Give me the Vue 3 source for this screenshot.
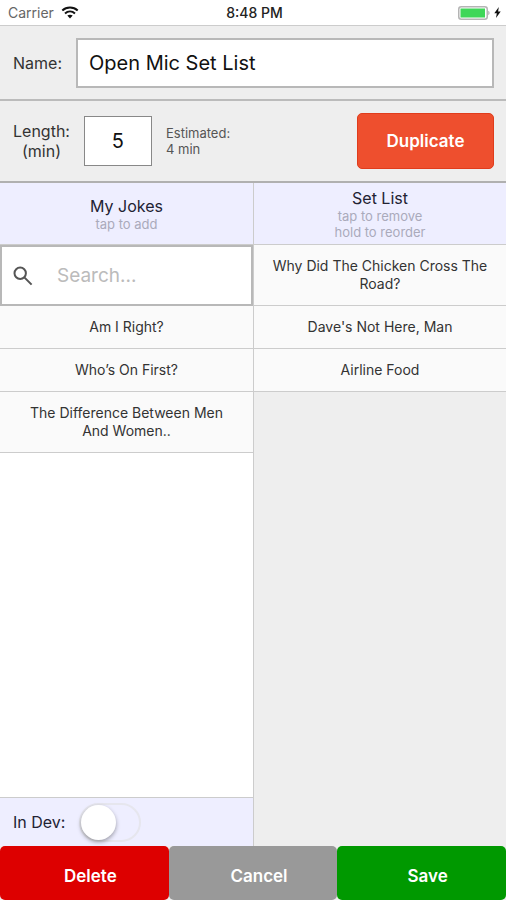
<script setup>
import { ref } from 'vue'

const name = ref('Open Mic Set List')
const length = ref('5')
const query = ref('')
const inDev = ref(false)
const jokes = ['Am I Right?', 'Who’s On First?', 'The Difference Between Men And Women..']
const setList = ['Why Did The Chicken Cross The Road?', "Dave's Not Here, Man", 'Airline Food']
</script>

<template>
  <div class="screen">
    <header class="status">
      <div class="carrier">
        <span>Carrier</span>
        <svg class="wifi" viewBox="0 0 18 13" aria-hidden="true">
          <path d="M1.3 4.6C5.6.6 12.4.6 16.7 4.6" />
          <path d="M4 7.5c2.9-2.6 7.1-2.6 10 0" />
          <path class="dot" d="M6.3 9.6c1.5-1.3 3.9-1.3 5.4 0L9 12.4z" />
        </svg>
      </div>
      <span class="time">8:48 PM</span>
      <div class="power">
        <svg class="battery" viewBox="0 0 32 14" aria-hidden="true">
          <rect x="0.75" y="0.75" width="28.5" height="12.5" rx="2.5" fill="#fff" stroke="#b4b4b4" stroke-width="1.5" />
          <rect x="2.5" y="2.5" width="24.5" height="9" fill="#3fd759" />
          <path d="M30.3 4.8c1.6.6 1.6 3.8 0 4.4z" fill="#aaa" />
        </svg>
        <svg class="bolt" viewBox="0 0 7 11" aria-hidden="true">
          <path d="M4.8 0 .3 6.2h2.5L2 11l4.7-6.4H4.1z" fill="#111" />
        </svg>
      </div>
    </header>

    <section class="bar name-bar">
      <label for="name">Name:</label>
      <input id="name" v-model="name" class="field name" type="text" />
    </section>

    <section class="bar length-bar">
      <label class="length-label" for="length">Length:<br />(min)</label>
      <input id="length" v-model="length" class="field length" type="text" inputmode="numeric" />
      <p class="estimate">Estimated:<br />4 min</p>
      <button class="duplicate" type="button">Duplicate</button>
    </section>

    <main class="columns">
      <section class="column left">
        <div class="heading">
          <h2>My Jokes</h2>
          <p>tap to add</p>
        </div>
        <label class="search">
          <svg viewBox="0 0 20 20" aria-label="Search">
            <circle cx="7.2" cy="7.2" r="5.7" />
            <path d="m11.6 11.6 7 7" />
          </svg>
          <input v-model="query" type="text" placeholder="Search..." />
        </label>
        <ul>
          <li v-for="joke in jokes" :key="joke">{{ joke }}</li>
        </ul>
        <label class="dev">
          <span>In Dev:</span>
          <input v-model="inDev" class="switch" type="checkbox" role="switch" />
        </label>
      </section>

      <section class="column right">
        <div class="heading">
          <h2>Set List</h2>
          <p>tap to remove<br />hold to reorder</p>
        </div>
        <ul>
          <li v-for="joke in setList" :key="joke">{{ joke }}</li>
        </ul>
      </section>
    </main>

    <footer class="actions">
      <button class="delete" type="button">Delete</button>
      <button class="cancel" type="button">Cancel</button>
      <button class="save" type="button">Save</button>
    </footer>
  </div>
</template>

<style>
body {
  margin: 0;
}
</style>

<style scoped>
.screen,
.screen * {
  box-sizing: border-box;
}
.screen {
  display: flex;
  flex-direction: column;
  min-height: 100vh;
  background: #eee;
  color: #333;
  font-family: Inter, "Liberation Sans", sans-serif;
  font-size: 16px;
}
input,
button {
  font-family: inherit;
}
h2,
p,
ul {
  margin: 0;
  padding: 0;
}
.status {
  display: grid;
  grid-template-columns: 1fr auto 1fr;
  align-items: center;
  height: 26px;
  padding: 0 5px 0 8px;
  border-bottom: 1px solid #ccc;
  background: #fff;
  font-size: 14px;
}
.carrier,
.power {
  display: flex;
  align-items: center;
  gap: 7px;
  color: #666;
}
.power {
  justify-content: flex-end;
  gap: 4px;
}
.time {
  color: #222;
  font-weight: 500;
}
.wifi {
  width: 18px;
  height: 13px;
  fill: none;
  stroke: #111;
  stroke-width: 2;
}
.wifi .dot {
  fill: #111;
  stroke: none;
}
.battery {
  width: 32px;
  height: 14px;
}
.bolt {
  width: 7px;
  height: 11px;
}
.bar {
  display: flex;
  align-items: center;
  gap: 14px;
  padding: 0 12px 0 13px;
}
.name-bar {
  height: 75px;
  border-bottom: 2px solid #bbb;
}
.length-bar {
  height: 82px;
  border-bottom: 2px solid #b0b0b0;
}
.field {
  height: 50px;
  border: 2px solid #b8b8b8;
  border-radius: 0;
  outline: none;
  background: #fff;
  color: #111;
  font-size: 20px;
}
.name {
  flex: 1;
  min-width: 0;
  padding: 0 11px;
}
.length {
  width: 68px;
  padding: 0;
  border: 1px solid #888;
  text-align: center;
}
.length-label {
  line-height: 20px;
  text-align: center;
}
.estimate {
  color: #555;
  font-size: 13px;
  line-height: 16px;
}
.duplicate {
  width: 137px;
  height: 56px;
  margin-left: auto;
  border: 1px solid #e03c1c;
  border-radius: 5px;
  background: #ee4f2e;
  color: #fff;
  font-size: 17px;
  font-weight: 600;
}
.columns {
  display: grid;
  grid-template-columns: repeat(2, minmax(0, 1fr));
  flex: 1;
}
.column {
  display: flex;
  flex-direction: column;
}
.left {
  background: #fff;
}
.right {
  border-left: 1px solid #ccc;
}
.heading {
  display: flex;
  flex-direction: column;
  align-items: center;
  justify-content: center;
  height: 62px;
  border-bottom: 1px solid #ccc;
  background: #eef;
  text-align: center;
}
h2 {
  color: #223;
  font-size: 16px;
  font-weight: 400;
  line-height: 20px;
}
.heading p {
  color: #aab;
  font-size: 13px;
  line-height: 16px;
}
.search {
  display: flex;
  align-items: center;
  gap: 24px;
  height: 61px;
  padding: 0 11px;
  border: 2px solid #b8b8b8;
  background: #fff;
}
.search svg {
  flex: none;
  width: 20px;
  height: 20px;
  fill: none;
  stroke: #555;
  stroke-width: 2;
}
.search input {
  flex: 1;
  min-width: 0;
  padding: 0;
  border: 0;
  outline: none;
  background: none;
  color: #111;
  font-size: 19px;
}
.search input::placeholder {
  color: #bbb;
  opacity: 1;
}
ul {
  list-style: none;
}
li {
  padding: 12px 16px;
  border-bottom: 1px solid #ccc;
  background: #fafafa;
  font-size: 14px;
  line-height: 18px;
  text-align: center;
}
.dev {
  display: flex;
  align-items: center;
  gap: 14px;
  height: 49px;
  margin-top: auto;
  padding: 0 13px;
  border-top: 1px solid #ccc;
  background: #eef;
  color: #223;
}
.switch {
  appearance: none;
  display: flex;
  align-items: center;
  width: 62px;
  height: 39px;
  margin: 0;
  border: 2px solid #e6e6ee;
  border-radius: 20px;
}
.switch::before {
  width: 35px;
  height: 35px;
  border-radius: 50%;
  background: #fff;
  box-shadow: 0 2px 4px rgb(0 0 0 / 35%);
  content: "";
}
.switch:checked {
  justify-content: flex-end;
  background: #3fd759;
}
.actions {
  display: grid;
  grid-template-columns: repeat(3, 1fr);
  height: 54px;
}
.actions button {
  padding: 6px 0 0 12px;
  border: 0;
  border-radius: 5px;
  color: #fff;
  font-size: 17px;
  font-weight: 600;
}
.delete {
  background: #d00;
}
.actions .cancel {
  background: #999;
}
.save {
  background: #090;
}
</style>
